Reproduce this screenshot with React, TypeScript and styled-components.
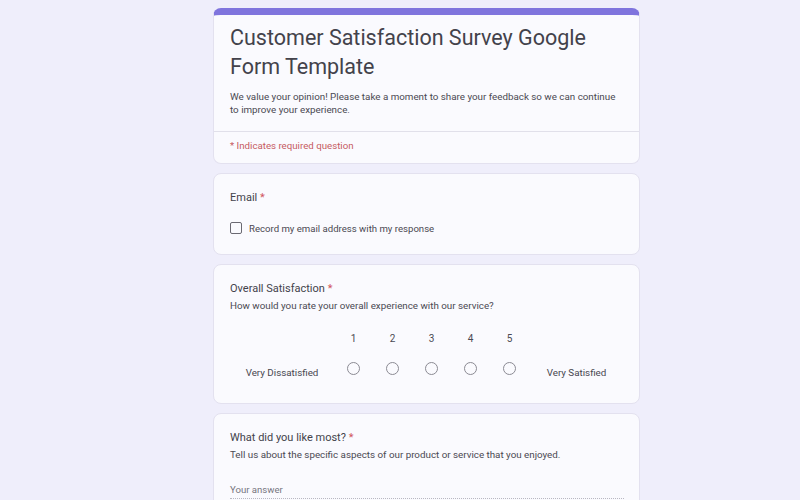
import React from 'react';
import styled, { createGlobalStyle } from 'styled-components';

const GlobalStyle = createGlobalStyle`
  html, body {
    margin: 0;
    padding: 0;
    background-color: #efeefb;
    font-family: Roboto, 'Liberation Sans', sans-serif;
  }
`;

const Page = styled.div`
  padding: 8px 0 0 213px;
  height: 500px;
  box-sizing: border-box;
  overflow: hidden;
`;

const Column = styled.div`
  width: 427px;
  display: flex;
  flex-direction: column;
  gap: 9px;
`;

const Card = styled.section<{ $accent?: boolean }>`
  background-color: #fafafe;
  border: 1px solid #e3e1ef;
  border-radius: 8px;
  overflow: hidden;
  ${({ $accent }) => $accent && `border-top: 7px solid #7f74dd;`}
`;

const HeaderBody = styled.div`
  padding: 8px 16px 15px 16px;
  border-bottom: 1px solid #e1e0ea;
`;

const Title = styled.h1`
  margin: 0 0 9px;
  font-size: 21.5px;
  font-weight: 400;
  line-height: 29px;
  color: #43424b;
`;

const Description = styled.p`
  margin: 0;
  font-size: 9.8px;
  line-height: 13px;
  color: #4a4952;
`;

const RequiredNote = styled.div`
  padding: 8px 16px 11px;
  font-size: 9.7px;
  line-height: 12px;
  color: #c65a62;
`;

const QuestionBody = styled.div<{ $bottom: number }>`
  padding: 16px 16px ${({ $bottom }) => $bottom}px;
`;

const Label = styled.div`
  font-size: 11px;
  color: #43424b;
  line-height: 16px;
`;

const Star = styled.span`
  color: #d0555d;
`;

const Hint = styled.div`
  margin-top: 2px;
  font-size: 9.8px;
  line-height: 14px;
  color: #4a4952;
`;

const CheckRow = styled.label`
  display: flex;
  align-items: center;
  gap: 7px;
  margin-top: 16px;
  font-size: 9.6px;
  color: #4a4952;
`;

const CheckBox = styled.span`
  width: 10px;
  height: 10px;
  border: 1.5px solid #6a6972;
  border-radius: 2px;
`;

const Scale = styled.div`
  display: grid;
  grid-template-columns: 104px repeat(5, 39px) 95px;
  grid-template-rows: 18px 30px;
  row-gap: 6px;
  margin-top: 16px;
  align-items: center;
  justify-items: center;
`;

const Num = styled.div<{ $col: number }>`
  grid-row: 1;
  grid-column: ${({ $col }) => $col};
  font-size: 10px;
  color: #4a4952;
`;

const EndLabel = styled.div<{ $col: number }>`
  grid-row: 2;
  grid-column: ${({ $col }) => $col};
  font-size: 9.8px;
  color: #47464f;
  padding-top: 9px;
`;

const Radio = styled.span<{ $col: number }>`
  grid-row: 2;
  grid-column: ${({ $col }) => $col};
  width: 11px;
  height: 11px;
  border: 1.2px solid #8b8a93;
  border-radius: 50%;
`;

const Answer = styled.div`
  margin-top: 22px;
  width: 394px;
  padding-bottom: 3px;
  border-bottom: 1px dotted #b9b8c2;
  font-size: 9.6px;
  color: #77767f;
`;

const App: React.FC = () => {
  return (
    <>
      <GlobalStyle />
      <Page>
        <Column>
          <Card $accent>
            <HeaderBody>
              <Title>Customer Satisfaction Survey Google Form Template</Title>
              <Description>
                We value your opinion! Please take a moment to share your feedback so we can continue
                to improve your experience.
              </Description>
            </HeaderBody>
            <RequiredNote>* Indicates required question</RequiredNote>
          </Card>

          <Card>
            <QuestionBody $bottom={20}>
              <Label>Email <Star>*</Star></Label>
              <CheckRow>
                <CheckBox />
                Record my email address with my response
              </CheckRow>
            </QuestionBody>
          </Card>

          <Card>
            <QuestionBody $bottom={20}>
              <Label>Overall Satisfaction <Star>*</Star></Label>
              <Hint>How would you rate your overall experience with our service?</Hint>
              <Scale>
                {[1, 2, 3, 4, 5].map((n) => (
                  <Num key={`n${n}`} $col={n + 1}>{n}</Num>
                ))}
                <EndLabel $col={1}>Very Dissatisfied</EndLabel>
                {[1, 2, 3, 4, 5].map((n) => (
                  <Radio key={`r${n}`} $col={n + 1} />
                ))}
                <EndLabel $col={7}>Very Satisfied</EndLabel>
              </Scale>
            </QuestionBody>
          </Card>

          <Card>
            <QuestionBody $bottom={60}>
              <Label>What did you like most? <Star>*</Star></Label>
              <Hint>Tell us about the specific aspects of our product or service that you enjoyed.</Hint>
              <Answer>Your answer</Answer>
            </QuestionBody>
          </Card>
        </Column>
      </Page>
    </>
  );
};

export default App;
